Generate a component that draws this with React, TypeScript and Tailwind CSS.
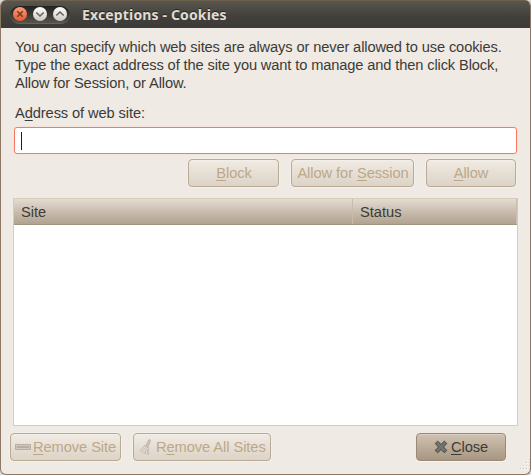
import type { ReactNode } from "react";

function Key({ children }: { children: ReactNode }) {
  return (
    <span className="underline decoration-1 underline-offset-[2px] [text-decoration-skip-ink:none]">
      {children}
    </span>
  );
}

function Button({ children, className, active = false }: { children: ReactNode; className: string; active?: boolean }) {
  const tone = active
    ? "border-[#9b8975] bg-linear-to-b from-[#d0c2b2] to-[#a79782] text-[#3c3b37] shadow-[0_1px_0_#f8f5f0,inset_0_1px_0_#d9cec1]"
    : "border-[#b9aa96] bg-linear-to-b from-[#f0ebe4] to-[#ddd3c7] text-[#bca888] shadow-[0_0_0_1px_#f3efe9,inset_0_1px_0_#f3eee8]";
  return (
    <button className={`flex h-7 shrink-0 items-center whitespace-nowrap rounded-[4px] border tracking-[-0.07px] ${tone} ${className}`}>
      {children}
    </button>
  );
}

function WindowControl({ close = false, d }: { close?: boolean; d: string }) {
  return (
    <span
      className={`flex size-[14px] items-center justify-center rounded-full ${
        close ? "bg-linear-to-b from-[#fb9a76] to-[#e75a2d]" : "bg-linear-to-b from-[#ffffff] to-[#cbc8c1]"
      }`}
    >
      <svg width="14" height="14" viewBox="0 0 14 14" fill="none">
        <path d={d} stroke={close ? "#703c2b" : "#66635c"} strokeWidth="1.6" />
      </svg>
    </span>
  );
}

export default function App() {
  return (
    <div className="h-[475px] w-[531px] overflow-hidden bg-[#dcd9d5]">
      <div className="flex h-full flex-col overflow-hidden rounded-[6px] border border-t-0 border-[#8b7965] bg-[#efeae3] font-['Liberation_Sans',Arial,sans-serif] text-[14.67px] leading-[18px] text-[#3c3b37]">
        <header className="flex h-7 shrink-0 items-center border-t border-[#6e624d] bg-linear-to-b from-[#59564e] via-[#403f3a] via-60% to-[#3c3b37] pl-[9px]">
          <div className="flex h-[18px] w-[60px] items-center gap-[6px] rounded-full border-b border-[#66645e] bg-linear-to-b from-[#22211e] to-[#55534d] pl-[3px]">
            <WindowControl close d="M4.3 4.3 9.7 9.7M9.7 4.3 4.3 9.7" />
            <WindowControl d="M3.3 5.5 7 9l3.7-3.5" />
            <WindowControl d="M3.3 8.5 7 5l3.7 3.5" />
          </div>
          <h1 className="ml-[12px] whitespace-nowrap font-['Noto_Sans','Open_Sans',sans-serif] text-[14px] font-bold tracking-[0.15px] text-[#dfdbd2] [text-shadow:0_-1px_0_#24231f]">
            Exceptions - Cookies
          </h1>
        </header>
        <main className="flex flex-1 flex-col">
          <p className="ml-[14px] mt-[10px] whitespace-nowrap tracking-[-0.13px]">
            You can specify which web sites are always or never allowed to use cookies.
            <br />
            Type the exact address of the site you want to manage and then click Block,
            <br />
            Allow for Session, or Allow.
          </p>
          <label className="ml-[14px] mt-[12px] tracking-[-0.1px]">
            A<Key>d</Key>dress of web site:
          </label>
          <div className="ml-[13px] mt-[5px] flex h-[27px] w-[503px] shrink-0 items-center rounded-[3px] border border-[#fa7861] bg-white pl-[6px] shadow-[0_0_0_1px_#f4e4db]">
            <span className="h-[18px] w-px bg-[#1d1c1a]" />
          </div>
          <div className="ml-[187px] mt-[5px] flex gap-3">
            <Button className="w-[91px] justify-center pl-px"><span><Key>B</Key>lock</span></Button>
            <Button className="w-[123px] justify-center pl-px"><span>Allow for <Key>S</Key>ession</span></Button>
            <Button className="w-[90px] justify-center"><span><Key>A</Key>llow</span></Button>
          </div>
          <section className="ml-[12px] mt-[11px] flex h-[228px] w-[505px] shrink-0 flex-col border border-[#d8cbb7] bg-white">
            <div className="flex h-[26px] border-b border-[#a19480] bg-linear-to-b from-[#e2dcd3] via-[#c9bdae] via-50% to-[#b1a390] leading-[26px]">
              <span className="w-[339px] border-r border-[#c9bcab] pl-[7px]">Site</span>
              <span className="flex-1 border-r border-[#c9bcab] pl-[7px]">Status</span>
            </div>
          </section>
          <footer className="mt-[7px] flex pl-[9px]">
            <Button className="w-[111px] pl-[4px]">
              <svg width="16" height="16" viewBox="0 0 16 16" className="mr-[2px] shrink-0">
                <rect x=".5" y="5.5" width="15" height="5" fill="#d0c9be" stroke="#b9b1a6" />
                <path d="M2 7.5h12v1H2z" fill="#b5aea4" stroke="#b5aea4" />
              </svg>
              <span><Key>R</Key>emove Site</span>
            </Button>
            <Button className="ml-3 w-[138px] pl-[4px]">
              <svg width="16" height="16" viewBox="0 0 16 16" className="mr-[2px] shrink-0">
                <path d="M8.2 6.5 10.5 1.2 12 .5l.5 1.2L10.2 7z" fill="#cbc7bf" stroke="#b4aea5" strokeWidth=".8" />
                <path d="M6.5 6.3 10.7 8 10.5 15.3 5.5 14 1.8 11.8z" fill="#ded8cf" stroke="#c2bbb1" strokeWidth=".8" />
                <path d="M6.3 7 10.8 9M6.8 9 4 12.5M8.5 9.5 7 14M10 10l-.5 4" fill="none" stroke="#bdb6ac" strokeWidth=".8" />
              </svg>
              <span>R<Key>e</Key>move All Sites</span>
            </Button>
            <Button active className="ml-[145px] w-[90px] pl-[16px]">
              <svg width="16" height="16" viewBox="0 0 16 16" className="mr-[2px] shrink-0">
                <path d="M2.2 4.5 4.7 2.2 8 5.4l3.3-3.2 2.5 2.3L10.5 8l3.3 3.4-2.5 2.4L8 10.5l-3.3 3.3-2.5-2.4L5.5 8z" fill="#73736f" stroke="#464744" strokeLinejoin="round" />
              </svg>
              <span><Key>C</Key>lose</span>
            </Button>
            <svg width="12" height="12" viewBox="0 0 12 12" className="ml-[13px] mt-[25px] shrink-0" shapeRendering="crispEdges">
              <path d="M10 1.5h1M7 4.5h1m2 0h1M4 7.5h1m2 0h1m2 0h1M1 10.5h1m2 0h1m2 0h1m2 0h1" stroke="#d3c9ba" />
              <path d="M11 2.5h1M8 5.5h1m2 0h1M5 8.5h1m2 0h1m2 0h1M2 11.5h1m2 0h1m2 0h1m2 0h1" stroke="#fff" />
            </svg>
          </footer>
        </main>
      </div>
    </div>
  );
}
